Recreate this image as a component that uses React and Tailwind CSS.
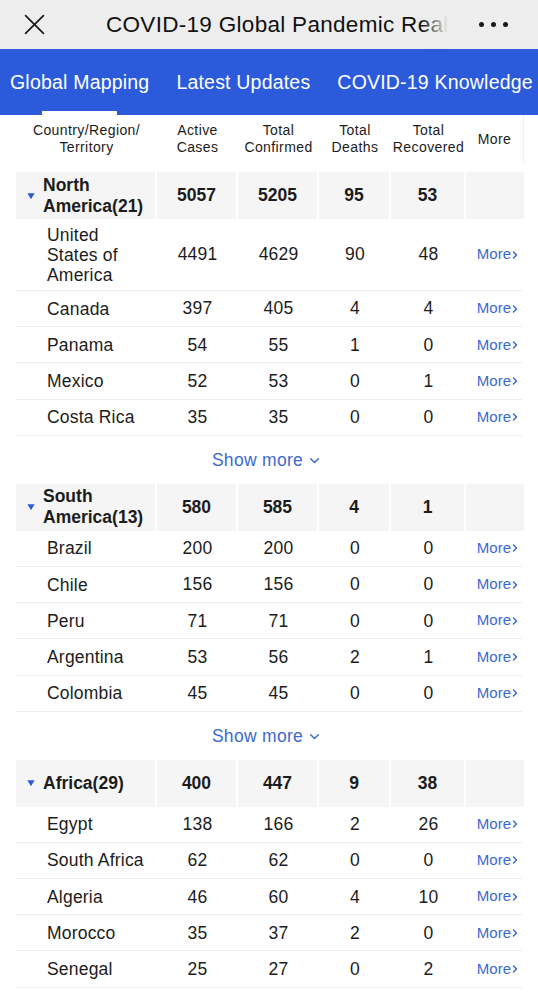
import React from "react";

const groups = [
  {
    name: ["North", "America(21)"],
    totals: ["5057", "5205", "95", "53"],
    rows: [
      [["United", "States of", "America"], "4491", "4629", "90", "48"],
      [["Canada"], "397", "405", "4", "4"],
      [["Panama"], "54", "55", "1", "0"],
      [["Mexico"], "52", "53", "0", "1"],
      [["Costa Rica"], "35", "35", "0", "0"],
    ],
    more: true,
  },
  {
    name: ["South", "America(13)"],
    totals: ["580", "585", "4", "1"],
    rows: [
      [["Brazil"], "200", "200", "0", "0"],
      [["Chile"], "156", "156", "0", "0"],
      [["Peru"], "71", "71", "0", "0"],
      [["Argentina"], "53", "56", "2", "1"],
      [["Colombia"], "45", "45", "0", "0"],
    ],
    more: true,
  },
  {
    name: ["Africa(29)"],
    totals: ["400", "447", "9", "38"],
    rows: [
      [["Egypt"], "138", "166", "2", "26"],
      [["South Africa"], "62", "62", "0", "0"],
      [["Algeria"], "46", "60", "4", "10"],
      [["Morocco"], "35", "37", "2", "0"],
      [["Senegal"], "25", "27", "0", "2"],
    ],
    more: false,
  },
];

const cols = "grid grid-cols-[141px_81px_81px_72px_75px_58px]";

function Chevron({ className }) {
  return (
    <svg viewBox="0 0 10 10" className={className} fill="none" stroke="currentColor" strokeWidth="1.5" strokeLinecap="round" strokeLinejoin="round">
      <path d="M3.5 2 L6.5 5 L3.5 8" />
    </svg>
  );
}

function GroupRow({ g }) {
  return (
    <div className={`${cols} h-[47px] text-[17.5px] font-bold text-[#1c1c1c]`}>
      <div className="bg-[#f5f5f5] border-r-2 border-white flex items-center pl-[11px]">
        <svg viewBox="0 0 10 10" className="w-[8px] h-[8px] mr-[8px] shrink-0">
          <path d="M0.5 1.5 L9.5 1.5 L5 9 Z" fill="#2b5bdb" />
        </svg>
        <div className="leading-[21px]">
          {g.name.map((n) => (
            <div key={n}>{n}</div>
          ))}
        </div>
      </div>
      {g.totals.map((t, i) => (
        <div key={i} className="bg-[#f5f5f5] border-r-2 border-white flex items-center justify-center">
          {t}
        </div>
      ))}
      <div className="bg-[#f5f5f5]"></div>
    </div>
  );
}

function DataRow({ r }) {
  const multi = r[0].length > 1;
  return (
    <div className={`${cols} ${multi ? "h-[72px]" : "h-[36.2px]"} border-b border-[#ececec] text-[17.5px] tracking-[0.2px] text-[#1c1c1c]`}>
      <div className="flex flex-col justify-center pl-[31px] leading-[20px]">
        {r[0].map((n) => (
          <div key={n}>{n}</div>
        ))}
      </div>
      {r.slice(1).map((v, i) => (
        <div key={i} className="flex items-center justify-center">
          {v}
        </div>
      ))}
      <div className="flex items-center justify-end pr-[4px] text-[15px] tracking-normal text-[#3c69cf]">
        More
        <Chevron className="w-[10px] h-[12px] ml-[-1px]" />
      </div>
    </div>
  );
}

export default function App() {
  return (
    <div className="w-[538px] min-h-[1000px] bg-white overflow-hidden" style={{ fontFamily: '"Liberation Sans", Arial, sans-serif' }}>
      {/* top bar */}
      <div className="h-[49px] bg-[#ededed] flex items-center relative">
        <svg viewBox="0 0 20 20" className="w-[21px] h-[21px] ml-[24px] shrink-0" fill="none" stroke="#1a1a1a" strokeWidth="1.6" strokeLinecap="round">
          <path d="M1.5 1.5 L18.5 18.5 M18.5 1.5 L1.5 18.5" />
        </svg>
        <div className="relative ml-[61px] w-[342px] overflow-hidden whitespace-nowrap text-[22.5px] tracking-[0.3px] text-[#111] leading-[49px]">
          COVID-19 Global Pandemic Real
          <div className="absolute right-0 top-0 h-full w-[26px] bg-gradient-to-r from-[#ededed00] to-[#ededed]"></div>
        </div>
        <div className="ml-auto mr-[30px] flex gap-[7px]">
          <span className="w-[5px] h-[5px] rounded-full bg-[#1a1a1a]"></span>
          <span className="w-[5px] h-[5px] rounded-full bg-[#1a1a1a]"></span>
          <span className="w-[5px] h-[5px] rounded-full bg-[#1a1a1a]"></span>
        </div>
      </div>

      {/* tabs */}
      <div className="h-[66px] bg-[#2b5bdb] flex items-end text-white text-[19.5px] tracking-[0.2px] whitespace-nowrap">
        <div className="flex flex-col items-center ml-[10px]">
          <div className="h-[62px] flex items-center pt-[5px]">Global Mapping</div>
          <div className="w-[75px] h-[4px] bg-white"></div>
        </div>
        <div className="h-[66px] flex items-center ml-[27px] pt-[1px]">Latest Updates</div>
        <div className="h-[66px] flex items-center ml-[27px] pt-[1px]">COVID-19 Knowledge</div>
      </div>

      {/* table */}
      <div className="mx-[16px]">
        <div className={`${cols} h-[57px] pb-[9px] text-[14px] tracking-[0.4px] leading-[17px] text-[#1c1c1c] text-center`}>
          <div className="flex flex-col justify-center">
            <div>Country/Region/</div>
            <div>Territory</div>
          </div>
          <div className="flex flex-col justify-center">
            <div>Active</div>
            <div>Cases</div>
          </div>
          <div className="flex flex-col justify-center">
            <div>Total</div>
            <div>Confirmed</div>
          </div>
          <div className="flex flex-col justify-center">
            <div>Total</div>
            <div>Deaths</div>
          </div>
          <div className="flex flex-col justify-center">
            <div>Total</div>
            <div>Recovered</div>
          </div>
          <div className="flex flex-col justify-center border-r border-[#f0f0f0]">
            <div>More</div>
          </div>
        </div>

        {groups.map((g, gi) => (
          <div key={gi}>
            <GroupRow g={g} />
            {g.rows.map((r, ri) => (
              <DataRow key={ri} r={r} />
            ))}
            {g.more && (
              <div className="h-[48px] flex items-center justify-center text-[17.5px] tracking-[0.3px] text-[#3c69cf] pr-[6px]">
                Show more
                <svg viewBox="0 0 10 10" className="w-[11px] h-[11px] ml-[6px] mt-[2px]" fill="none" stroke="currentColor" strokeWidth="1.3" strokeLinecap="round" strokeLinejoin="round">
                  <path d="M1.5 3.5 L5 6.8 L8.5 3.5" />
                </svg>
              </div>
            )}
          </div>
        ))}
      </div>
    </div>
  );
}
